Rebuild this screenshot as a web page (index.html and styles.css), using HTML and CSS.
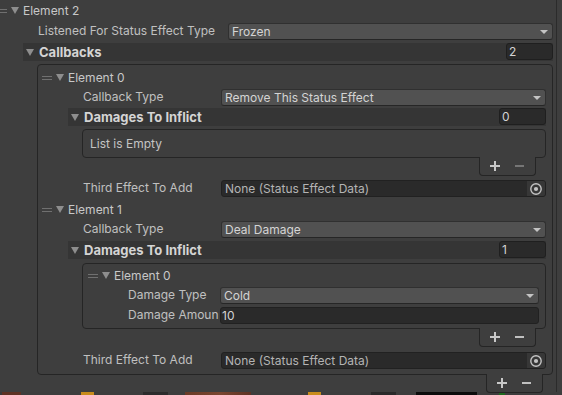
FILE: index.html
```html
<!DOCTYPE html>
<html>
<head>
<meta charset="utf-8">
<link rel="stylesheet" href="styles.css">
</head>
<body>
<div class="panel">
  <div class="elem-row">
    <span class="handle first"></span><span class="tri"></span><span class="elem-text">Element 2</span>
  </div>
  <div class="prop prop-top">
    <span class="label lbl-top">Listened For Status Effect Type</span>
    <div class="field dropdown"><span>Frozen</span><span class="arrow"></span></div>
  </div>
  <div class="band band-top">
    <span class="tri"></span><span class="band-text">Callbacks</span>
    <div class="intfield">2</div>
  </div>

  <div class="listbox outer">
    <div class="elem-row">
      <span class="handle"></span><span class="tri"></span><span class="elem-text">Element 0</span>
    </div>
    <div class="prop prop-l1">
      <span class="label lbl-l1">Callback Type</span>
      <div class="field dropdown"><span>Remove This Status Effect</span><span class="arrow"></span></div>
    </div>
    <div class="band band-l1 gap1">
      <span class="tri"></span><span class="band-text">Damages To Inflict</span>
      <div class="intfield">0</div>
    </div>
    <div class="listbox empty">List is Empty</div>
    <div class="footer">
      <svg class="plus" width="10" height="10" viewBox="0 0 10 10"><path d="M5 0V10M0 5H10" stroke="#c8c8c8" stroke-width="2"/></svg>
      <svg class="minus" width="9" height="10" viewBox="0 0 9 10"><path d="M0 5H9" stroke="#767676" stroke-width="2"/></svg>
    </div>
    <div class="prop prop-l1 gap2">
      <span class="label lbl-l1">Third Effect To Add</span>
      <div class="field objfield"><span class="obj-text">None (Status Effect Data)</span>
        <span class="picker"><svg width="14" height="14" viewBox="0 0 14 14"><circle cx="7" cy="7" r="5.2" fill="none" stroke="#c4c4c4" stroke-width="1.4"/><circle cx="7" cy="7" r="2.1" fill="#c4c4c4"/></svg></span>
      </div>
    </div>

    <div class="elem-row gap2">
      <span class="handle"></span><span class="tri"></span><span class="elem-text">Element 1</span>
    </div>
    <div class="prop prop-l1">
      <span class="label lbl-l1">Callback Type</span>
      <div class="field dropdown"><span>Deal Damage</span><span class="arrow"></span></div>
    </div>
    <div class="band band-l1 gap2">
      <span class="tri"></span><span class="band-text">Damages To Inflict</span>
      <div class="intfield">1</div>
    </div>
    <div class="listbox inner">
      <div class="elem-row">
        <span class="handle"></span><span class="tri"></span><span class="elem-text">Element 0</span>
      </div>
      <div class="prop prop-l2">
        <span class="label lbl-l2">Damage Type</span>
        <div class="field dropdown"><span>Cold</span><span class="arrow"></span></div>
      </div>
      <div class="prop prop-l2">
        <span class="label lbl-l2">Damage Amoun</span>
        <div class="field textfield">10</div>
      </div>
    </div>
    <div class="footer">
      <svg class="plus" width="10" height="10" viewBox="0 0 10 10"><path d="M5 0V10M0 5H10" stroke="#c8c8c8" stroke-width="2"/></svg>
      <svg class="minus" width="9" height="10" viewBox="0 0 9 10"><path d="M0 5H9" stroke="#c0c0c0" stroke-width="2"/></svg>
    </div>
    <div class="prop prop-l1 gap3">
      <span class="label lbl-l1">Third Effect To Add</span>
      <div class="field objfield"><span class="obj-text">None (Status Effect Data)</span>
        <span class="picker"><svg width="14" height="14" viewBox="0 0 14 14"><circle cx="7" cy="7" r="5.2" fill="none" stroke="#c4c4c4" stroke-width="1.4"/><circle cx="7" cy="7" r="2.1" fill="#c4c4c4"/></svg></span>
      </div>
    </div>
  </div>
  <div class="footer">
    <svg class="plus" width="10" height="10" viewBox="0 0 10 10"><path d="M5 0V10M0 5H10" stroke="#c8c8c8" stroke-width="2"/></svg>
    <svg class="minus" width="9" height="10" viewBox="0 0 9 10"><path d="M0 5H9" stroke="#c0c0c0" stroke-width="2"/></svg>
  </div>
</div>
<div class="scene"></div>
</body>
</html>
```

FILE: styles.css
```css
* { box-sizing: border-box; }
html, body { margin: 0; padding: 0; }
body {
  width: 562px;
  height: 395px;
  overflow: hidden;
  background: #3e3e3e;
  font-family: Inter, "Noto Sans", sans-serif;
  font-size: 12px;
  color: #c4c4c4;
}
.panel {
  width: 557px;
  height: 392px;
  border-right: 1px solid #2b2b2b;
  padding: 1px 3px 0 0;
  display: flex;
  flex-direction: column;
}
.scene {
  height: 3px;
  background: linear-gradient(to right,
    #3a3a3a 0, #3a3a3a 2px, #5e3224 2px, #5e3224 21px,
    #3d3d3d 21px, #3d3d3d 81px, #c98c1c 81px, #c98c1c 94px,
    #3d3d3d 94px, #3d3d3d 143px, #2c2c2c 143px, #2c2c2c 168px,
    #3d3d3d 168px, #3d3d3d 185px, #6a3a26 185px, #7a4630 220px, #5e3224 251px,
    #3d3d3d 251px, #3d3d3d 308px, #c98c1c 308px, #c98c1c 321px,
    #3d3d3d 321px, #3d3d3d 371px, #2a2a2a 371px, #2a2a2a 396px,
    #3d3d3d 396px, #3d3d3d 416px, #0c0c0c 416px, #0c0c0c 477px,
    #3d3d3d 477px, #3d3d3d 499px, #1f6a1f 499px, #1f6a1f 505px,
    #3d3d3d 505px);
}

/* rows */
.elem-row {
  display: flex;
  align-items: center;
  height: 19px;
  flex-shrink: 0;
  white-space: nowrap;
  color: #c8c8c8;
}
.handle {
  width: 10px;
  height: 4px;
  border-top: 1px solid #707070;
  border-bottom: 1px solid #707070;
  margin-right: 4px;
  flex-shrink: 0;
}
.handle.first { margin-left: -3px; }
.tri {
  width: 0;
  height: 0;
  border-left: 4px solid transparent;
  border-right: 4px solid transparent;
  border-top: 7px solid #8e8e8e;
  margin-right: 4px;
  flex-shrink: 0;
}

.prop {
  display: flex;
  align-items: flex-start;
  height: 20px;
  flex-shrink: 0;
  white-space: nowrap;
}
.label {
  line-height: 20px;
  height: 20px;
  overflow: hidden;
  flex-shrink: 0;
  color: #c0c0c0;
}
.prop-top { padding-left: 38px; margin-top: 1px; }
.lbl-top { width: 190px; }
.prop-l1 { padding-left: 41px; }
.lbl-l1 { width: 138px; }
.prop-l2 { padding-left: 40px; }
.lbl-l2 { width: 92px; }

.field {
  flex: 1;
  min-width: 0;
  margin-top: 2px;
  height: 17px;
  border-radius: 3px;
  display: flex;
  align-items: center;
  overflow: hidden;
}
.dropdown {
  background: #515151;
  border: 1px solid #303030;
  border-bottom-color: #262626;
  color: #d4d4d4;
  padding: 0 4px 0 3px;
}
.arrow {
  margin-left: auto;
  width: 0;
  height: 0;
  border-left: 4px solid transparent;
  border-right: 4px solid transparent;
  border-top: 4px solid #c4c4c4;
}
.textfield {
  background: #2a2a2a;
  border: 1px solid #212121;
  color: #d4d4d4;
  padding-left: 1px;
}
.objfield {
  background: #2a2a2a;
  border: 1px solid #212121;
  color: #b4b4b4;
  padding-left: 3px;
}
.obj-text { flex: 1; }
.picker {
  width: 18px;
  height: 100%;
  background: #373737;
  display: flex;
  align-items: center;
  justify-content: center;
}
.picker svg { display: block; }

/* foldout header bands */
.band {
  display: flex;
  align-items: center;
  height: 18px;
  flex-shrink: 0;
  background: #353535;
  padding-left: 3px;
}
.band .tri { margin-right: 5px; }
.band-top { margin: 2px 0 0 23px; }
.band-l1 { margin-left: 26px; }
.band-text {
  font-weight: 700;
  font-size: 13px;
  color: #d4d4d4;
}
.intfield {
  margin-left: auto;
  align-self: flex-start;
  width: 47px;
  height: 17px;
  background: #2a2a2a;
  border: 1px solid #1f1f1f;
  border-radius: 3px;
  padding-left: 2px;
  display: flex;
  align-items: center;
  color: #d4d4d4;
}

/* list boxes */
.listbox {
  border: 1px solid #252525;
  border-radius: 4px;
  display: flex;
  flex-direction: column;
  flex-shrink: 0;
}
.outer { margin: 3px 0 0 37px; padding: 3px 6px 4px 4px; }
.empty {
  margin: 3px 0 0 40px;
  height: 29px;
  padding-left: 7px;
  flex-direction: row;
  align-items: center;
  color: #c4c4c4;
}
.inner { margin: 4px 0 0 40px; padding: 2px 6px 3px 5px; }

.footer {
  align-self: flex-end;
  flex-shrink: 0;
  width: 57px;
  height: 19px;
  margin-top: -1px;
  margin-right: 10px;
  border: 1px solid #252525;
  border-top: none;
  border-radius: 0 0 4px 4px;
  background: #3e3e3e;
  display: flex;
  align-items: center;
  padding-left: 10px;
}
.footer svg { display: block; }
.footer .minus { margin-left: 15px; }

.gap1 { margin-top: 1px; }
.gap2 { margin-top: 2px; }
.gap3 { margin-top: 3px; }
```
